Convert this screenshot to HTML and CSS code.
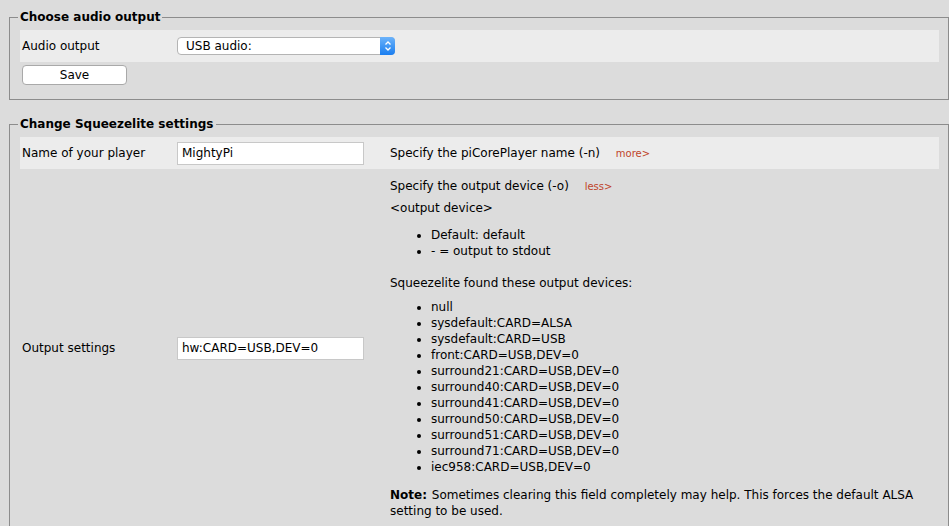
FILE: index.html
```html
<!DOCTYPE html>
<html lang="en">
<head>
    <meta charset="UTF-8">
    <title>Squeezelite settings</title>
    <link rel="stylesheet" href="styles.css">
</head>
<body>
    <fieldset class="panel">
        <legend>Choose audio output</legend>
        <table class="settings">
            <colgroup>
                <col class="col-label">
                <col class="col-field">
                <col>
            </colgroup>
            <tr class="odd">
                <td class="label">Audio output</td>
                <td class="field" colspan="2">
                    <div class="select-wrap">
                        <select class="select">
                            <option>USB audio:</option>
                        </select>
                        <span class="select-arrows">
                            <svg width="8" height="12" viewBox="0 0 8 12">
                                <path d="M1.5 4.5 L4 2 L6.5 4.5 M1.5 7.5 L4 10 L6.5 7.5" fill="none" stroke="#fff" stroke-width="1.3"/>
                            </svg>
                        </span>
                    </div>
                </td>
            </tr>
            <tr>
                <td class="label" colspan="3">
                    <button class="btn-save">Save</button>
                </td>
            </tr>
        </table>
    </fieldset>

    <fieldset class="panel second">
        <legend>Change Squeezelite settings</legend>
        <table class="settings">
            <colgroup>
                <col class="col-label">
                <col class="col-field">
                <col>
            </colgroup>
            <tr class="odd">
                <td class="label">Name of your player</td>
                <td class="field"><input class="text-input" type="text" value="MightyPi"></td>
                <td class="desc">
                    <p class="line">Specify the piCorePlayer name (-n) <a class="more" href="#">more&gt;</a></p>
                </td>
            </tr>
            <tr>
                <td class="label">Output settings</td>
                <td class="field"><input class="text-input" type="text" value="hw:CARD=USB,DEV=0"></td>
                <td class="desc tall">
                    <p class="line">Specify the output device (-o) <a class="more" href="#">less&gt;</a></p>
                    <p class="line gap">&lt;output device&gt;</p>
                    <ul class="opts first">
                        <li>Default: default</li>
                        <li>- = output to stdout</li>
                    </ul>
                    <p class="line">Squeezelite found these output devices:</p>
                    <ul class="opts devices">
                        <li>null</li>
                        <li>sysdefault:CARD=ALSA</li>
                        <li>sysdefault:CARD=USB</li>
                        <li>front:CARD=USB,DEV=0</li>
                        <li>surround21:CARD=USB,DEV=0</li>
                        <li>surround40:CARD=USB,DEV=0</li>
                        <li>surround41:CARD=USB,DEV=0</li>
                        <li>surround50:CARD=USB,DEV=0</li>
                        <li>surround51:CARD=USB,DEV=0</li>
                        <li>surround71:CARD=USB,DEV=0</li>
                        <li>iec958:CARD=USB,DEV=0</li>
                    </ul>
                    <p class="line note"><b>Note:</b> Sometimes clearing this field completely may help. This forces the default ALSA setting to be used.</p>
                </td>
            </tr>
        </table>
    </fieldset>
</body>
</html>
```

FILE: styles.css
```css
body {
    font-family: "DejaVu Sans", Verdana, sans-serif;
    font-size: 12px;
    color: #000;
    background-color: #dcdcdc;
    margin: 0;
    padding: 10px 0 0 9px;
}

.panel {
    margin: 0;
    padding: 6px 9px 14px 10px;
    border: 1px solid #8c8c8c;
    min-width: 0;
}

.panel.second {
    margin-top: 17px;
}

.panel legend {
    font-weight: bold;
    font-size: 12px;
    padding: 0 2px;
    margin-left: -2px;
}

.settings {
    width: 100%;
    border-collapse: collapse;
    table-layout: fixed;
}

.col-label {
    width: 155px;
}

.col-field {
    width: 205px;
}

.settings td {
    padding: 0;
    vertical-align: middle;
    box-sizing: border-box;
}

.settings tr.odd {
    background-color: #ececec;
}

.settings tr.odd td {
    height: 32px;
}

.label,
.field {
    padding-left: 2px !important;
}

.desc {
    padding: 0 10px !important;
}

.desc.tall {
    padding-top: 9px !important;
    padding-bottom: 8px !important;
}

.line {
    margin: 0;
    line-height: 16px;
}

.line.gap {
    margin-top: 5px;
}

.note b {
    margin-right: 1px;
}

.more {
    color: #c0452a;
    font-size: 10px;
    text-decoration: none;
    margin-left: 12px;
}

.opts {
    margin: 0;
    padding-left: 41px;
    line-height: 16px;
}

.opts.first {
    margin: 11px 0 16px;
}

.opts.devices {
    margin: 8px 0 12px;
}

.text-input {
    width: 187px;
    height: 23px;
    box-sizing: border-box;
    border: 1px solid #c8c8c8;
    background: #fff;
    padding: 0 4px;
    font-family: "DejaVu Sans", Verdana, sans-serif;
    font-size: 12px;
    color: #000;
    margin: 0;
    display: block;
}

.select-wrap {
    position: relative;
    width: 218px;
    height: 18px;
}

.select {
    appearance: none;
    -webkit-appearance: none;
    width: 100%;
    height: 18px;
    box-sizing: border-box;
    border: 1px solid #b4b4b4;
    border-radius: 4px;
    background: #fff;
    padding: 0 8px;
    font-family: "DejaVu Sans", Verdana, sans-serif;
    font-size: 12px;
    color: #000;
    display: block;
}

.select-arrows {
    position: absolute;
    right: 0;
    top: 0;
    width: 15px;
    height: 18px;
    box-sizing: border-box;
    border-radius: 0 4px 4px 0;
    background: linear-gradient(#6cb3fa, #1a7ef0);
    display: flex;
    align-items: center;
    justify-content: center;
}

.btn-save {
    display: block;
    margin-top: 3px;
    width: 105px;
    height: 20px;
    box-sizing: border-box;
    background: #fff;
    border: 1px solid #a9a9a9;
    border-radius: 4px;
    font-family: "DejaVu Sans", Verdana, sans-serif;
    font-size: 12px;
    color: #000;
    padding: 0;
}
```
